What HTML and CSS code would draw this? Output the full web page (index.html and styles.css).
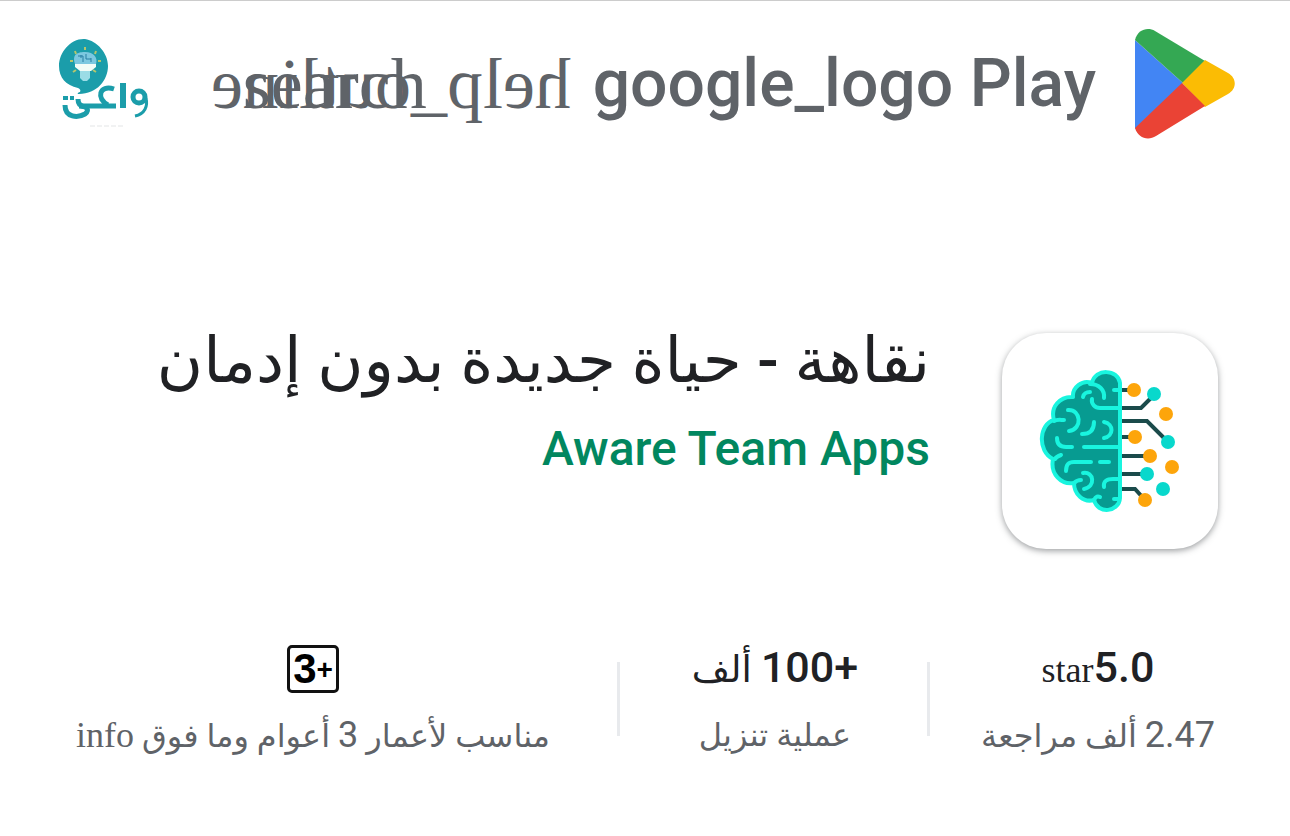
FILE: index.html
```html
<!DOCTYPE html>
<html lang="ar" dir="rtl">
<head>
<meta charset="utf-8">
<title>نقاهة - حياة جديدة بدون إدمان</title>
<link rel="stylesheet" href="styles.css">
</head>
<body>
<header class="topbar">
  <a class="brand" href="#">
    <svg class="brand-mark" viewBox="0 0 102 112" aria-hidden="true">
      <path fill="#4285f4" d="M1 12 L49 55 L1 101Z"/>
      <path fill="#34a853" d="M1 12 C4 1 14-1 21 3 L71 33 L49 55Z"/>
      <path fill="#fbbc04" d="M71 32 L94 45 C103 50 103 61 94 66 L71 79 L48 55Z"/>
      <path fill="#ea4335" d="M1 100 L48 55 L71 78 L22 108 C14 113 4 110 1 100Z"/>
    </svg>
    <span class="brand-name" dir="ltr">google_logo Play</span>
  </a>
  <div class="actions">
    <button class="icon-btn flipped" type="button">help_outline</button>
    <button class="icon-btn search" type="button">search</button>
  </div>
  <a class="account" href="#" aria-label="واعي">
    <svg class="account-logo" viewBox="0 0 102 102" aria-hidden="true">
      <path fill="#1b9daa" d="M31 6 C43 8 54 20 54 33 C54 47 43 61 25 61 C23 61 23 60 26 59 C27 57 26 56 24 55 C12 52 5 45 5 33 C5 19 17 5 31 6Z"/>
      <path fill="#7cc8e0" d="M21 31 C17 20 26 19 31 19 C40 19 44 25 42 31Z"/>
      <path fill="none" stroke="#287ea4" d="M24 23h5v6m3-8v5h5m-10-4v3m10 0v4"/>
      <path fill="#f2fcf7" d="M21 31h21v3l-5 4h-11l-5-4z"/>
      <path fill="#9bdce6" d="M26 38h10v7l-3 3h-4l-3-3z"/>
      <path fill="none" stroke="#b5c66c" stroke-width="2" d="M31 14v3M21 18l1 3M42 18l-1 3M16 28h3M44 28h3M19 39l3-2M42 39l-3-2"/>
      <g fill="none" stroke="#1b9daa" stroke-width="5">
        <path d="M11 72 C11 85 24 85 31 81 C36 77 33 73 25 73"/>
        <path d="M24 66 C24 71 26 73 30 73 H62"/>
        <path d="M60 56 C45 51 42 66 54 72"/>
        <path stroke-width="6" d="M69 50v25"/>
        <circle cx="85" cy="64" r="6"/>
        <path stroke-width="3" d="M92 65 C94 73 91 81 81 83"/>
      </g>
      <path fill="#1b9daa" d="M9 63h5v4h-5zM16 63h4v4h-4z"/>
      <path stroke="#e3e5e6" stroke-dasharray="5 2" d="M36 93h33"/>
    </svg>
  </a>
</header>
<main>
  <section class="app">
    <div class="app-icon">
      <svg viewBox="0 0 160 165" aria-hidden="true">
        <path fill="#079b91" stroke="#19f5df" stroke-width="4" stroke-linejoin="round" d="M90 22 C88 8 65 7 62 22 C52 18 42 27 43 36 C30 35 20 46 24 59 C9 63 7 90 23 98 C20 113 31 124 44 122 C44 133 53 142 64 139 C68 154 89 151 90 137Z"/>
        <g fill="none" stroke="#19f5df" stroke-width="4" stroke-linecap="round" stroke-linejoin="round">
          <path d="M60 23 C69 23 75 29 74 37M53 36 C54 32 56 31 60 31M62 38 C61 43 65 47 70 47H90M24 60 C27 58 31 59 34 59M38 49 C51 48 53 68 39 70M64 61 C64 69 60 73 52 73M74 61 C84 63 84 75 74 77M27 77 C27 83 30 86 36 86H42M54 86H90M25 98 C26 96 28 95 31 94M36 110 C36 103 39 101 44 101H61M70 101H79M53 112 C64 110 66 126 54 128M74 126 C73 120 77 118 83 118H90M44 122 C47 119 49 119 51 119M64 139 C66 135 68 135 70 136M84 29H90M84 138H89"/>
        </g>
        <g fill="none" stroke="#1b4b4b" stroke-width="4">
          <path d="M92 29H103M92 47H111L123 35M92 60H117L136 79M92 76H103M92 95H120M92 113H116M92 128H105L115 139"/>
        </g>
        <g fill="#fda50b"><circle cx="104" cy="29" r="7"/><circle cx="136" cy="53" r="7"/><circle cx="105" cy="76" r="7"/><circle cx="120" cy="95" r="7"/><circle cx="142" cy="106" r="7"/><circle cx="115" cy="139" r="7"/></g>
        <g fill="#08d8cc"><circle cx="124" cy="33" r="7"/><circle cx="138" cy="81" r="7"/><circle cx="117" cy="113" r="7"/><circle cx="133" cy="128" r="7"/></g>
      </svg>
    </div>
    <div class="app-info">
      <h1 class="app-title">نقاهة - حياة جديدة بدون إدمان</h1>
      <a class="developer" href="#" dir="ltr">Aware Team Apps</a>
    </div>
  </section>
  <section class="stats">
    <div class="stat">
      <div class="value" dir="ltr"><span class="glyph">star</span>5.0</div>
      <div class="label"><span class="num">2.47</span> ألف مراجعة</div>
    </div>
    <div class="stat">
      <div class="value"><span class="big">+100</span> ألف</div>
      <div class="label">عملية تنزيل</div>
    </div>
    <div class="stat">
      <div class="value badge-row"><span class="age-badge" dir="ltr">3<span class="plus">+</span></span></div>
      <div class="label">مناسب لأعمار <span class="num">3</span> أعوام وما فوق <span class="glyph">info</span></div>
    </div>
  </section>
</main>
</body>
</html>
```
FILE: styles.css
```css
* { box-sizing: border-box; }
body {
  margin: 0;
  background: #fff;
  color: #202124;
  border-top: 1px solid #ccc;
  font-family: Roboto, "DejaVu Sans", sans-serif;
}
a { text-decoration: none; color: inherit; }
.topbar {
  display: flex;
  align-items: center;
  height: 166px;
  padding: 0 54px;
  color: #5f6368;
}
.brand { display: flex; align-items: center; gap: 38px; }
.brand-mark { width: 102px; height: 112px; }
.brand-name { font-size: 66px; font-weight: 500; line-height: 80px; white-space: nowrap; }
.actions { display: flex; margin-inline-start: 22px; }
.icon-btn {
  height: 72px;
  padding: 0;
  border: 0;
  background: none;
  color: inherit;
  font: 72px/72px "Liberation Serif", serif;
  white-space: nowrap;
  direction: ltr;
  display: flex;
}
.flipped { width: 72px; transform: scaleX(-1); }
.search { margin-right: 72px; }
.account { margin-inline-start: auto; }
.account-logo { display: block; width: 102px; height: 102px; }
.app {
  display: flex;
  gap: 72px;
  padding: 166px 72px 0;
}
.app-icon {
  flex: none;
  width: 216px;
  height: 216px;
  padding: 28px;
  border-radius: 44px;
  box-shadow: 0 2px 6px rgba(60, 64, 67, .5);
}
.app-icon svg { display: block; width: 160px; height: 165px; }
.app-title { margin: 0; font-size: 63px; font-weight: 500; line-height: 56px; white-space: nowrap; }
.developer {
  display: block;
  margin-top: 28px;
  color: #01875f;
  font-size: 48px;
  font-weight: 500;
  line-height: 64px;
  text-align: right;
}
.stats {
  display: grid;
  grid-template-columns: 336fr 310fr 614fr;
  padding: 88px 24px 0 6px;
}
.stat { position: relative; text-align: center; white-space: nowrap; }
.stat + .stat::before {
  content: "";
  position: absolute;
  top: 25px;
  right: 0;
  width: 3px;
  height: 74px;
  background: #e8eaed;
}
.value { height: 60px; font-size: 37px; font-weight: 500; line-height: 60px; }
.value[dir="ltr"], .big { font-size: 43px; }
.badge-row { display: flex; align-items: center; justify-content: center; padding-top: 4px; }
.label { margin-top: 8px; color: #5f6368; font-size: 32px; line-height: 60px; }
.num { font-size: 36px; }
.glyph { font-family: "Liberation Serif", serif; font-weight: 400; font-size: 36px; }
.age-badge {
  height: 48px;
  padding: 0 3px;
  border: 3px solid #111;
  border-radius: 5px;
  color: #000;
  font: bold 42px/42px "Liberation Sans", sans-serif;
}
.plus { font-size: 28px; vertical-align: 4px; }
```
